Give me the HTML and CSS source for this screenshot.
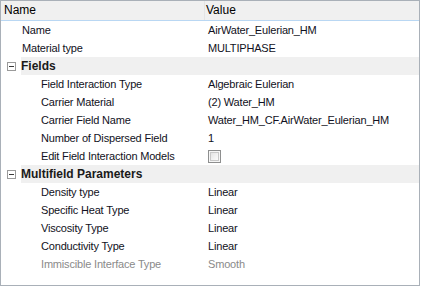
FILE: index.html
```html
<!DOCTYPE html>
<html lang="en">
<head>
    <meta charset="UTF-8">
    <title>Property Grid</title>
    <link rel="stylesheet" href="styles.css">
</head>
<body>
    <div class="prop-grid">
        <div class="prop-header">
            <div class="col-name">Name</div>
            <div class="col-value">Value</div>
        </div>

        <div class="prop-row">
            <div class="cell-name top">Name</div>
            <div class="cell-value">AirWater_Eulerian_HM</div>
        </div>
        <div class="prop-row">
            <div class="cell-name top">Material type</div>
            <div class="cell-value">MULTIPHASE</div>
        </div>

        <div class="group-row">
            <span class="expander"></span>
            <div class="group-title">Fields</div>
        </div>
        <div class="prop-row">
            <div class="cell-name">Field Interaction Type</div>
            <div class="cell-value">Algebraic Eulerian</div>
        </div>
        <div class="prop-row">
            <div class="cell-name">Carrier Material</div>
            <div class="cell-value">(2) Water_HM</div>
        </div>
        <div class="prop-row">
            <div class="cell-name">Carrier Field Name</div>
            <div class="cell-value">Water_HM_CF.AirWater_Eulerian_HM</div>
        </div>
        <div class="prop-row">
            <div class="cell-name">Number of Dispersed Field</div>
            <div class="cell-value">1</div>
        </div>
        <div class="prop-row">
            <div class="cell-name">Edit Field Interaction Models</div>
            <div class="cell-value"><span class="checkbox"></span></div>
        </div>

        <div class="group-row">
            <span class="expander"></span>
            <div class="group-title">Multifield Parameters</div>
        </div>
        <div class="prop-row">
            <div class="cell-name">Density type</div>
            <div class="cell-value">Linear</div>
        </div>
        <div class="prop-row">
            <div class="cell-name">Specific Heat Type</div>
            <div class="cell-value">Linear</div>
        </div>
        <div class="prop-row">
            <div class="cell-name">Viscosity Type</div>
            <div class="cell-value">Linear</div>
        </div>
        <div class="prop-row">
            <div class="cell-name">Conductivity Type</div>
            <div class="cell-value">Linear</div>
        </div>
        <div class="prop-row disabled">
            <div class="cell-name">Immiscible Interface Type</div>
            <div class="cell-value">Smooth</div>
        </div>
    </div>
</body>
</html>
```

FILE: styles.css
```css
* {
    margin: 0;
    padding: 0;
    box-sizing: border-box;
}

body {
    font-family: 'Liberation Sans', Arial, sans-serif;
    font-size: 11px;
    color: #111122;
    background: #ffffff;
}

.prop-grid {
    width: 420px;
    height: 286px;
    border: 1px solid #a9b0b8;
    background: #ffffff;
    overflow: hidden;
}

.prop-header {
    display: flex;
    height: 20px;
    background: #f0f0f0;
    border-bottom: 1px solid #b9d7f3;
    color: #000000;
    font-size: 12px;
    line-height: 19px;
}

.col-name {
    width: 204px;
    padding-left: 3px;
    border-right: 1px solid #e4e4e4;
}

.col-value {
    flex: 1;
    padding-left: 1px;
}

.prop-row {
    display: flex;
    height: 18px;
    line-height: 18px;
    letter-spacing: -0.18px;
}

.cell-name {
    width: 205px;
    padding-left: 40px;
    white-space: nowrap;
}

.cell-name.top {
    padding-left: 21px;
}

.cell-value {
    flex: 1;
    padding-left: 2px;
    white-space: nowrap;
    display: flex;
    align-items: center;
}

.disabled {
    color: #8a8a8a;
}

.group-row {
    display: flex;
    height: 18px;
    align-items: center;
}

.expander {
    position: relative;
    width: 9px;
    height: 9px;
    margin: 0 5px 0 6px;
    border: 1px solid #9a9a9a;
    background: #ffffff;
}

.expander::after {
    content: "";
    position: absolute;
    left: 1px;
    top: 3px;
    width: 5px;
    height: 1px;
    background: #3a3a3a;
}

.group-title {
    flex: 1;
    height: 18px;
    line-height: 18px;
    background: #f0f0f0;
    font-weight: bold;
    font-size: 12px;
    color: #1a1a1a;
}

.checkbox {
    width: 13px;
    height: 13px;
    border: 1px solid #8e8f8f;
    background: linear-gradient(135deg, #dcdcdc 0%, #f4f4f4 60%, #ffffff 100%);
    box-shadow: inset 0 0 0 1px #f6f6f6, inset 0 0 0 2px #c8c8c8;
}
```
